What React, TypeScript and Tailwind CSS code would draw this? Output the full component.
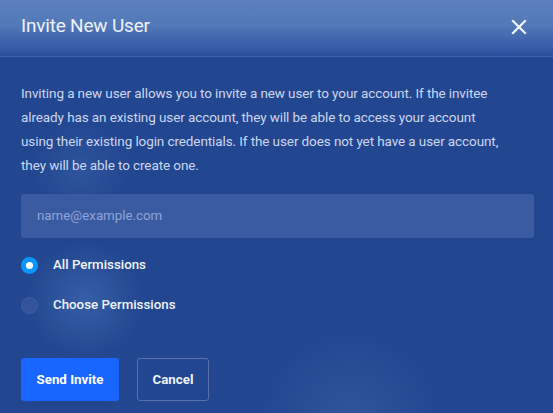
import React from "react";

export default function App() {
  return (
    <div
      className="relative w-[553px] h-[413px] overflow-hidden bg-[#22468f] text-white"
      style={{ fontFamily: "Roboto, 'Liberation Sans', sans-serif" }}
    >
      <div className="absolute inset-0 bg-[radial-gradient(circle_at_85px_300px,rgba(90,140,210,0.35),transparent_60px),radial-gradient(circle_at_350px_420px,rgba(90,130,200,0.25),transparent_90px),radial-gradient(circle_at_80px_170px,rgba(90,140,210,0.2),transparent_50px)]" />
      <div className="relative flex flex-col h-full">
        <div className="h-[57px] flex items-center justify-between pl-[21px] pr-[26px] bg-[linear-gradient(180deg,#5b7fbd_0%,#5479b8_45%,#3a5ea8_80%,#2c509d_100%)] border-b border-[#3f64ad]">
          <h1 className="text-[19px] text-[#eef2fa] font-normal tracking-[-0.2px] mt-[-4px]">Invite New User</h1>
          <svg width="16" height="16" viewBox="0 0 16 16" className="mt-[-2px]">
            <path d="M2 2L14 14M14 2L2 14" stroke="#f3f6fc" strokeWidth="2.2" strokeLinecap="square" />
          </svg>
        </div>
        <div className="px-[21px] pt-[24px]">
          <p className="w-[486px] text-[13.5px] leading-[24px] text-[#cdd7ef] tracking-[-0.1px]">
            Inviting a new user allows you to invite a new user to your account. If the invitee already has an existing user account, they will be able to access your account using their existing login credentials. If the user does not yet have a user account, they will be able to create one.
          </p>
          <div className="mt-[17px] h-[44px] w-[513px] rounded-[3px] bg-[#3a5ba1] flex items-center pl-[16px]">
            <span className="text-[13.3px] text-[#8fa5d6]">name@example.com</span>
          </div>
          <div className="mt-[18px] flex items-center h-[18px]">
            <div className="w-[17px] h-[17px] rounded-full bg-[#0b96ff] flex items-center justify-center">
              <div className="w-[7px] h-[7px] rounded-full bg-white" />
            </div>
            <span className="ml-[15px] text-[13.3px] font-medium text-[#f0f3fa]">All Permissions</span>
          </div>
          <div className="mt-[22px] flex items-center h-[18px]">
            <div className="w-[17px] h-[17px] rounded-full bg-[#33539a] border border-[#3f5fa5]" />
            <span className="ml-[15px] text-[13.3px] font-medium text-[#f0f3fa]">Choose Permissions</span>
          </div>
          <div className="mt-[44px] flex gap-[18px]">
            <button className="w-[98px] h-[43px] rounded-[3px] bg-[#1865ff] text-[13.3px] font-bold text-white">Send Invite</button>
            <button className="w-[72px] h-[43px] rounded-[3px] border border-[#5670aa] text-[13.3px] font-bold text-[#eef2fa]">Cancel</button>
          </div>
        </div>
      </div>
    </div>
  );
}
